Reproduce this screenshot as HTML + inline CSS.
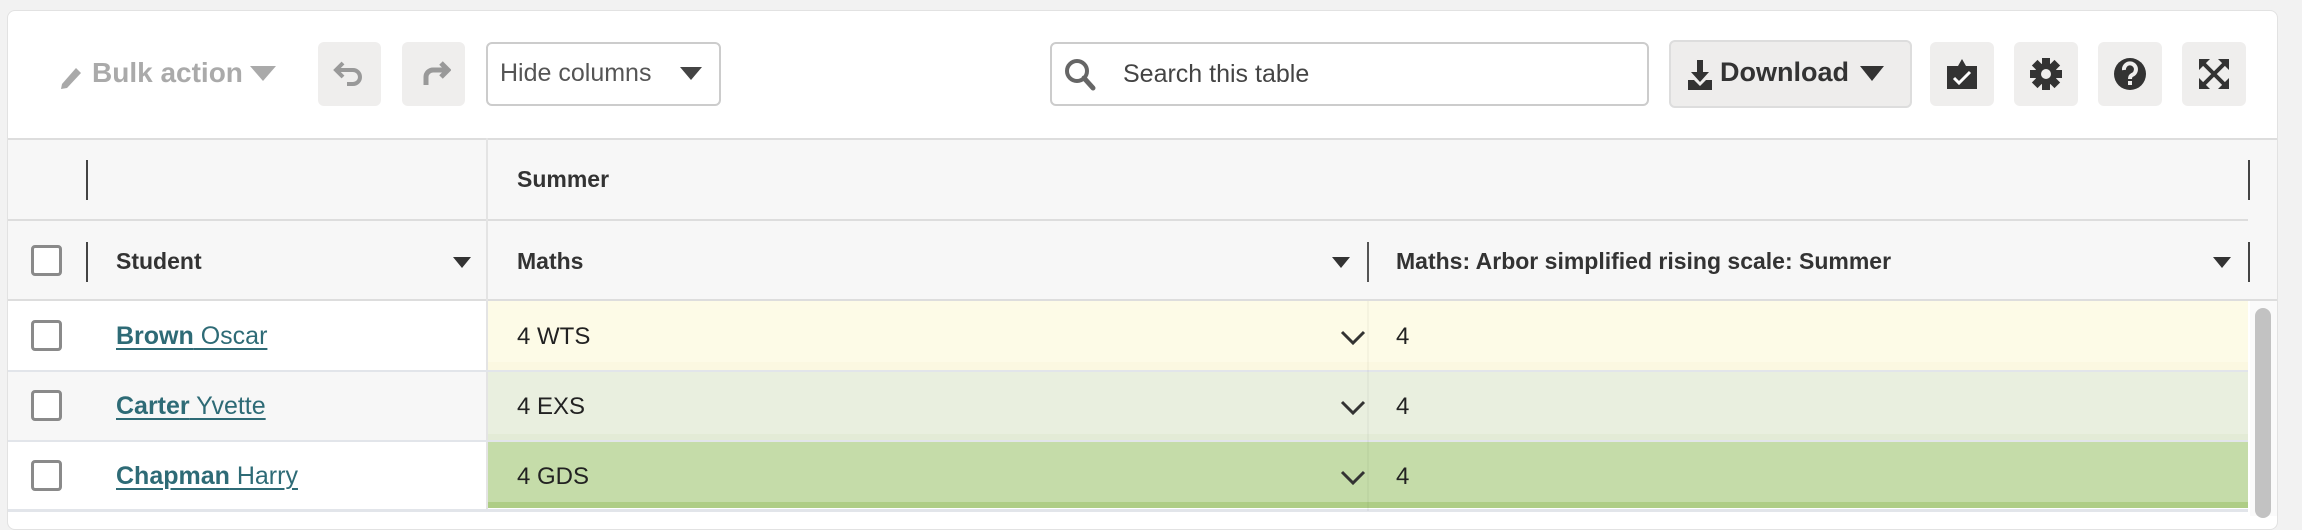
<!DOCTYPE html>
<html><head><meta charset="utf-8"><style>
*{box-sizing:border-box;margin:0;padding:0}
body{width:2302px;height:516px;background:#f2f2f2;font-family:"Liberation Sans",sans-serif;position:relative;overflow:hidden}
.card{position:absolute;left:7px;top:10px;width:2271px;height:520px;background:#fff;border:1px solid #e2e2e2;border-radius:8px;overflow:hidden}
.a{position:absolute}
.btn{position:absolute;top:42px;height:64px;background:#efeeed;border-radius:6px;display:flex;align-items:center;justify-content:center}
.txt{position:absolute;white-space:nowrap}
.cb{position:absolute;left:31px;width:31px;height:31px;border:3px solid #8a8a8a;border-radius:4px;background:#fff}
.vl{position:absolute;width:2px;background:#444}
.hd{font-weight:bold;font-size:23px;color:#333}
.cell{font-size:24px;color:#222}
.lk{font-size:25px;color:#2e6b76;text-decoration:underline;text-decoration-thickness:2px;text-underline-offset:4px}
</style></head><body>
<div class="card"></div>
<!-- toolbar -->
<svg class="a" style="left:58px;top:64px" width="28" height="26" viewBox="0 0 28 26"><path d="M4 20 L18 4 L23 9 L9 24 L3 25 Z" fill="#a9a9a9"/></svg>
<div class="txt" style="left:92px;top:57px;font-size:28px;font-weight:bold;color:#aaa">Bulk action</div>
<svg class="a" style="left:250px;top:66px" width="26" height="16"><path d="M0 0H26L13 15Z" fill="#aaa"/></svg>
<div class="btn" style="left:318px;width:63px"><svg width="34" height="30" viewBox="0 0 34 30"><path d="M10 4 L3 11 L10 18 M4 11 H20 A7 7 0 0 1 20 25 H14" fill="none" stroke="#999" stroke-width="4"/></svg></div>
<div class="btn" style="left:402px;width:63px"><svg width="34" height="30" viewBox="0 0 34 30"><path d="M24 4 L31 11 L24 18 M30 11 H16 A7 7 0 0 0 9 18 V26" fill="none" stroke="#999" stroke-width="5"/></svg></div>
<div class="a" style="left:486px;top:42px;width:235px;height:64px;border:2px solid #ccc;border-radius:6px;background:#fff"></div>
<div class="txt" style="left:500px;top:59px;font-size:25px;color:#555">Hide columns</div>
<svg class="a" style="left:680px;top:67px" width="22" height="14"><path d="M0 0H22L11 13Z" fill="#444"/></svg>
<div class="a" style="left:1050px;top:42px;width:599px;height:64px;border:2px solid #ccc;border-radius:6px;background:#fff"></div>
<svg class="a" style="left:1063px;top:57px" width="36" height="36" viewBox="0 0 36 36"><circle cx="14" cy="14" r="10" fill="none" stroke="#666" stroke-width="4"/><path d="M21 21 L30 31" stroke="#666" stroke-width="5" stroke-linecap="round"/></svg>
<div class="txt" style="left:1123px;top:60px;font-size:25px;color:#444">Search this table</div>
<div class="a" style="left:1669px;top:40px;width:243px;height:68px;background:#eeedec;border:2px solid #ddd;border-radius:6px"></div>
<svg class="a" style="left:1688px;top:60px" width="24" height="30" viewBox="0 0 24 30"><path d="M9 0H15V12H21L12 22L3 12H9Z M0 20H6L12 26L18 20H24V30H0Z" fill="#333"/></svg>
<div class="txt" style="left:1720px;top:57px;font-size:27px;font-weight:bold;color:#333">Download</div>
<svg class="a" style="left:1860px;top:66px" width="24" height="16"><path d="M0 0H24L12 15Z" fill="#333"/></svg>
<div class="btn" style="left:1930px;width:64px"><svg width="34" height="34" viewBox="0 0 34 34"><path d="M2 9 H13 L17 2 L21 9 H32 V32 H2 Z" fill="#333"/><path d="M9 21 L14 26 L25 15" fill="none" stroke="#fff" stroke-width="3"/></svg></div>
<div class="btn" style="left:2014px;width:64px"><svg width="34" height="34" viewBox="-17 -17 34 34"><g fill="#333"><circle r="11"/><rect x="-4" y="-16" width="8" height="32"/><rect x="-4" y="-16" width="8" height="32" transform="rotate(45)"/><rect x="-4" y="-16" width="8" height="32" transform="rotate(90)"/><rect x="-4" y="-16" width="8" height="32" transform="rotate(135)"/></g><circle r="5" fill="#efeeed"/></svg></div>
<div class="btn" style="left:2098px;width:64px"><svg width="34" height="34" viewBox="0 0 34 34"><circle cx="17" cy="17" r="16" fill="#333"/><path d="M11 13 A6 6 0 1 1 19 18 Q17 19 17 22" fill="none" stroke="#efeeed" stroke-width="4"/><rect x="15" y="24" width="4" height="4" fill="#efeeed"/></svg></div>
<div class="btn" style="left:2182px;width:64px"><svg width="34" height="34" viewBox="0 0 34 34"><path d="M6 6 L28 28 M28 6 L6 28" stroke="#333" stroke-width="4"/><path d="M2 2H13L2 13Z M32 2H21L32 13Z M2 32H13L2 21Z M32 32H21L32 21Z" fill="#333"/></svg></div>
<!-- table header -->
<div class="a" style="left:8px;top:138px;width:2269px;height:162px;background:#f7f7f7;border-top:2px solid #ddd"></div>
<div class="a" style="left:8px;top:219px;width:2240px;height:2px;background:#ddd"></div>
<div class="a" style="left:8px;top:299px;width:2269px;height:2px;background:#ddd"></div>
<div class="a" style="left:486px;top:138px;width:2px;height:372px;background:#e4e4e4"></div>
<div class="vl" style="left:86px;top:160px;height:40px"></div>
<div class="vl" style="left:2248px;top:160px;height:40px"></div>
<div class="txt hd" style="left:517px;top:166px">Summer</div>
<div class="cb" style="left:31px;top:245px"></div>
<div class="vl" style="left:86px;top:242px;height:40px"></div>
<div class="txt hd" style="left:116px;top:248px">Student</div>
<svg class="a" style="left:453px;top:257px" width="18" height="12"><path d="M0 0H18L9 11Z" fill="#333"/></svg>
<div class="txt hd" style="left:517px;top:248px">Maths</div>
<svg class="a" style="left:1332px;top:257px" width="18" height="12"><path d="M0 0H18L9 11Z" fill="#333"/></svg>
<div class="vl" style="left:1367px;top:242px;height:40px;background:#555"></div>
<div class="txt hd" style="left:1396px;top:248px">Maths: Arbor simplified rising scale: Summer</div>
<svg class="a" style="left:2213px;top:257px" width="18" height="12"><path d="M0 0H18L9 11Z" fill="#333"/></svg>
<div class="vl" style="left:2248px;top:242px;height:40px"></div>
<!-- rows -->
<div class="a" style="left:8px;top:301px;width:478px;height:69px;background:#fff"></div>
<div class="a" style="left:488px;top:301px;width:1760px;height:69px;background:#fdfbe7;border-bottom:8px solid #fbf8e1"></div>
<div class="a" style="left:8px;top:370px;width:2240px;height:2px;background:#e2e5ea"></div>
<div class="a" style="left:8px;top:372px;width:478px;height:68px;background:#f7f7f7"></div>
<div class="a" style="left:488px;top:372px;width:1760px;height:68px;background:#e9efdf;border-bottom:6px solid #e3ebd6"></div>
<div class="a" style="left:8px;top:440px;width:2240px;height:2px;background:#e2e5ea"></div>
<div class="a" style="left:8px;top:442px;width:478px;height:68px;background:#fff"></div>
<div class="a" style="left:488px;top:442px;width:1760px;height:66px;background:#c5dca9;border-bottom:6px solid #aecd85"></div>
<div class="a" style="left:8px;top:509px;width:2240px;height:3px;background:#e2e5ea"></div>
<div class="a" style="left:1367px;top:301px;width:2px;height:210px;background:rgba(0,0,0,0.03)"></div>
<div class="cb" style="left:31px;top:320px"></div>
<div class="cb" style="left:31px;top:390px"></div>
<div class="cb" style="left:31px;top:460px"></div>
<div class="txt lk" style="left:116px;top:322px"><b>Brown</b> Oscar</div>
<div class="txt lk" style="left:116px;top:392px"><b>Carter</b> Yvette</div>
<div class="txt lk" style="left:116px;top:462px"><b>Chapman</b> Harry</div>
<div class="txt cell" style="left:517px;top:323px">4 WTS</div>
<div class="txt cell" style="left:517px;top:393px">4 EXS</div>
<div class="txt cell" style="left:517px;top:463px">4 GDS</div>
<svg class="a" style="left:1340px;top:330px" width="26" height="16"><path d="M2 2 L13 13 L24 2" fill="none" stroke="#333" stroke-width="3"/></svg>
<svg class="a" style="left:1340px;top:400px" width="26" height="16"><path d="M2 2 L13 13 L24 2" fill="none" stroke="#333" stroke-width="3"/></svg>
<svg class="a" style="left:1340px;top:470px" width="26" height="16"><path d="M2 2 L13 13 L24 2" fill="none" stroke="#333" stroke-width="3"/></svg>
<div class="txt cell" style="left:1396px;top:323px">4</div>
<div class="txt cell" style="left:1396px;top:393px">4</div>
<div class="txt cell" style="left:1396px;top:463px">4</div>
<div class="a" style="left:2250px;top:301px;width:27px;height:215px;background:#fafafa"></div>
<div class="a" style="left:2255px;top:308px;width:16px;height:210px;background:#c2c2c2;border-radius:8px"></div>
</body></html>
